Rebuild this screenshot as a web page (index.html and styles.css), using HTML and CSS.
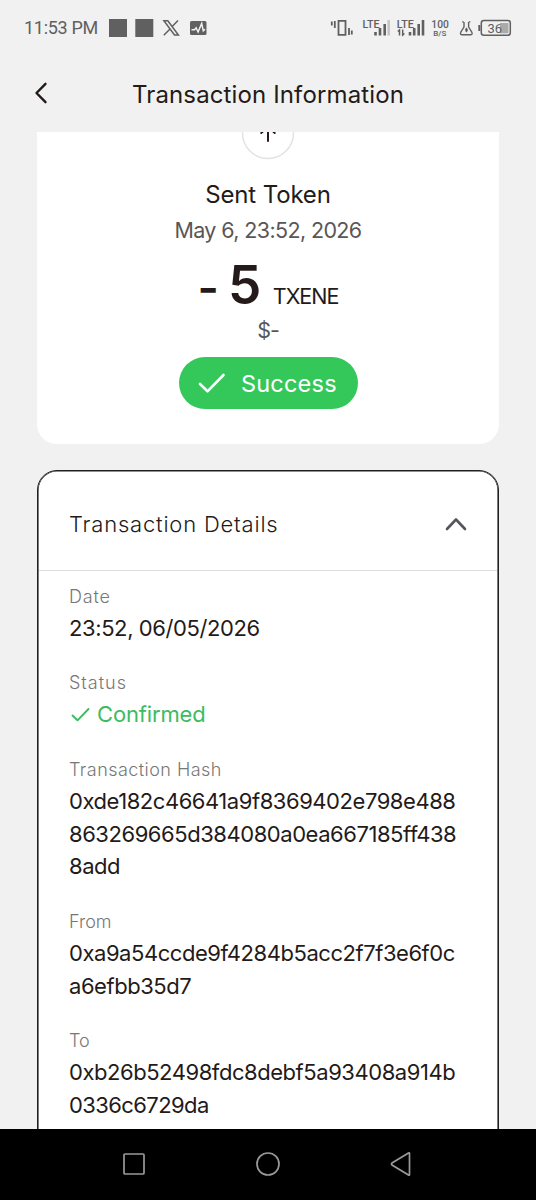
FILE: index.html
```html
<!DOCTYPE html>
<html lang="en">
<head>
<meta charset="utf-8">
<title>Transaction Information</title>
<link rel="stylesheet" href="styles.css">
</head>
<body>
<div class="screen">
  <div class="statusbar">
    <span class="clock">11:53 PM</span>
    <svg class="notifs" width="98" height="20" viewBox="109 17 98 20">
      <path class="solid" d="M109 18h18v18h-18zM135.300 18h18v18h-18z"/>
      <path class="line" stroke-width="1.500" d="M163.900 19.800h3.900l10.600 14.200h-3.900zM178 19.500l-6.300 6.600M170 28l-6.200 6.300"/>
      <rect class="solid" x="190" y="20" width="16.500" height="14" rx="1.500"/>
      <path class="trace" d="M191.500 28.800h3l1.600-2 2 4.200 3.600-8.500 1.600 7.300 1.700-1.500"/>
    </svg>
    <svg class="signals" width="183" height="22" viewBox="330 16 183 22">
      <path class="line" stroke-width="1.800" d="M338.500 19.800h7v14h-7zM331.800 20.500v4M334.800 20v7M349 27v7M351.800 29.500v4"/>
      <g class="net">
        <text x="362.500" y="27" textLength="17" lengthAdjust="spacingAndGlyphs">LTE</text>
        <text x="396.800" y="27" textLength="17" lengthAdjust="spacingAndGlyphs">LTE</text>
      </g>
      <path class="line" stroke-width="2.600" d="M375.500 31v3.500M380 27v7.500M384.700 23v11.500M410 31v3.500M414.200 27v7.500M418.700 23v11.500M423 19v15.500"/>
      <path class="faint" d="M388.700 19v15.500"/>
      <path class="line" stroke-width="1.500" d="M399.500 34.500v-5.500l-1.700 1.500M402.700 28.500v5.500l1.700-1.500"/>
      <text class="rate" x="431.300" y="27" textLength="17.500" lengthAdjust="spacingAndGlyphs">100</text>
      <text class="unit" x="433.300" y="35.300" textLength="13" lengthAdjust="spacingAndGlyphs">B/S</text>
      <path class="line" stroke-width="1.400" stroke-linejoin="round" d="M462.300 20.500l1.700 1v4.500l-3.200 5.200q-1 2.300 1 2.500h9q2-.2 1-2.500l-3.200-5.200v-4.500l1.700-1M466.900 27l-1.300 2h1.700l-1.300 2"/>
      <rect class="line" stroke-width="1.500" x="481.300" y="19.500" width="29" height="14.800" rx="2.500"/>
      <path class="line" stroke-width="2" d="M479.300 24v6"/>
      <rect class="charge" x="500" y="22" width="8.500" height="10.300"/>
      <text class="battery" x="487.500" y="31.500" textLength="14.500" lengthAdjust="spacingAndGlyphs">36</text>
    </svg>
  </div>

  <header class="topbar">
    <svg class="back" width="14" height="24" viewBox="0 0 14 24"><path d="M11.500 2.800L2.500 12l9 9.200"/></svg>
    <h1 class="title">Transaction Information</h1>
  </header>

  <main class="content">
    <section class="summary">
      <svg class="sent" width="54" height="28" viewBox="0 0 54 28">
        <circle cx="27" cy="1" r="25.500"/>
        <path d="M27 9V-9M20.300 1L27-5.500l6.700 6.500"/>
      </svg>
      <div class="kind">Sent Token</div>
      <div class="when">May 6, 23:52, 2026</div>
      <div class="amount"><span class="minus">-</span><span class="number">5</span><span class="symbol">TXENE</span></div>
      <div class="fiat">$-</div>
      <div class="pill">
        <svg width="28" height="22" viewBox="0 0 28 22"><path d="M2 12l7.500 7.300L25.500 3"/></svg>
        <span>Success</span>
      </div>
    </section>

    <section class="details">
      <div class="details-head">
        <h2>Transaction Details</h2>
        <svg width="24" height="14" viewBox="0 0 24 14"><path d="M3 12l9-9.500 9 9.500"/></svg>
      </div>
      <dl class="fields">
        <div class="field"><dt class="l-date">Date</dt><dd class="v-date">23:52, 06/05/2026</dd></div>
        <div class="field"><dt class="l-status">Status</dt><dd class="confirmed"><svg width="20" height="16" viewBox="0 0 20 16"><path d="M1.500 8.500l5 4.800L17.500 2"/></svg>Confirmed</dd></div>
        <div class="field"><dt class="l-hash">Transaction Hash</dt><dd class="hex"><span class="row">0xde182c46641a9f8369402e798e488</span><span class="row">863269665d384080a0ea667185ff438</span><span class="row">8add</span></dd></div>
        <div class="field"><dt>From</dt><dd class="hex"><span class="row">0xa9a54ccde9f4284b5acc2f7f3e6f0c</span><span class="row">a6efbb35d7</span></dd></div>
        <div class="field"><dt>To</dt><dd class="hex"><span class="row">0xb26b52498fdc8debf5a93408a914b</span><span class="row last">0336c6729da</span></dd></div>
      </dl>
    </section>
  </main>

  <nav class="navbar">
    <svg width="24" height="24" viewBox="0 0 24 24"><rect x="2" y="2" width="20" height="20" rx="1"/></svg>
    <svg width="24" height="24" viewBox="0 0 24 24"><circle cx="12" cy="12" r="11"/></svg>
    <svg width="24" height="24" viewBox="0 0 24 24"><path d="M20.500 1.500v21q0 1-1 .4L3 13q-1-1 0-2L19.500 1.100q1-.6 1 .4z"/></svg>
  </nav>
</div>
</body>
</html>
```

FILE: styles.css
```css
* { box-sizing: border-box; margin: 0; padding: 0; }
body { background: #f1f1f1; font-family: Inter, "Open Sans", sans-serif; color: #231a19; }
svg { display: block; flex: none; fill: none; }
.screen { width: 536px; height: 1200px; display: flex; flex-direction: column; overflow: hidden; }

.statusbar { height: 55px; flex: none; display: flex; align-items: center; padding: 0 23px 0 24px; font-family: Roboto, sans-serif; color: #606060; }
.clock { font-size: 18px; line-height: 20px; width: 85px; letter-spacing: -0.3px; white-space: nowrap; }
.signals { margin-left: auto; }
.solid { fill: #606060; }
.line { stroke: #606060; }
.trace { stroke: #f1f1f1; stroke-width: 1.5; }
.faint { stroke: #c4c4c4; stroke-width: 2.5; }
.charge { fill: #aaa; }
.statusbar text { fill: #606060; font-family: Roboto, sans-serif; }
.net { font-size: 11px; font-weight: 500; }
.rate { font-size: 11px; font-weight: 500; }
.unit { font-size: 8px; font-weight: 500; }
.battery { font-size: 12.5px; }

.topbar { height: 77px; flex: none; display: grid; grid-template-columns: 66px 1fr 66px; align-items: start; padding-top: 24px; }
.back { margin: 2px 0 0 34px; height: 24px; stroke: #231a19; stroke-width: 2.4; stroke-linecap: round; stroke-linejoin: round; }
.title { font-size: 24px; line-height: 31px; font-weight: 400; letter-spacing: 0.13px; text-align: center; white-space: nowrap; }

.content { flex: 1; min-height: 0; overflow: hidden; padding: 0 37px; }
.summary { height: 311.5px; background: #fff; border-radius: 0 0 20px 20px; display: flex; flex-direction: column; align-items: center; }
.sent circle { stroke: #e2e2e2; stroke-width: 1.5; }
.sent path { stroke: #231a19; stroke-width: 2; stroke-linecap: round; }
.kind { margin-top: 20px; font-size: 24px; line-height: 30px; letter-spacing: -0.15px; }
.when { margin-top: 6px; font-size: 21.5px; line-height: 28px; letter-spacing: -0.62px; color: #5b5656; }
.amount { margin-top: 11px; height: 60px; display: flex; align-items: baseline; line-height: 60px; }
.minus { font-size: 46px; font-weight: 600; }
.number { font-size: 53px; font-weight: 600; margin-left: 9px; }
.symbol { font-size: 21.5px; letter-spacing: -1px; margin-left: 11.5px; }
.fiat { margin-top: 1px; font-size: 21.5px; line-height: 28px; letter-spacing: -1px; color: #5b5656; }
.pill { margin-top: 13px; width: 179px; height: 52px; border-radius: 26px; background: #34c85a; color: #fff; display: flex; align-items: center; padding-left: 19px; gap: 15.5px; font-size: 23.5px; letter-spacing: 0.2px; }
.pill svg { stroke: #fff; stroke-width: 2.6; stroke-linecap: round; stroke-linejoin: round; }

.details { margin-top: 26.5px; width: 462px; height: 720px; border: 1px solid #231f1f; box-shadow: inset 0 0 0 0.6px #231f1f; border-radius: 20px; background: #fff; }
.details-head { height: 100px; margin: 0 1px; border-bottom: 1px solid #dedede; display: flex; align-items: center; justify-content: space-between; padding: 7px 29px 0 30px; }
.details-head h2 { font-size: 22px; line-height: 30px; font-weight: 300; letter-spacing: 0.8px; white-space: nowrap; }
.details-head svg { stroke: #55555c; stroke-width: 2.6; stroke-linecap: round; stroke-linejoin: round; }
.fields { padding: 14.5px 30px 0 31px; display: flex; flex-direction: column; gap: 28px; }
.field { display: flex; flex-direction: column; gap: 4px; }
dt { font-size: 18px; line-height: 22px; font-weight: 300; color: #777; }
.l-date { letter-spacing: 0.8px; }
.l-status { letter-spacing: 1px; }
.l-hash { letter-spacing: 0.45px; }
dd { font-size: 22px; line-height: 32.7px; white-space: nowrap; }
.v-date { letter-spacing: -0.4px; }
.hex { letter-spacing: -0.45px; }
.row { display: block; }
.last { letter-spacing: -0.6px; }
.confirmed { display: flex; align-items: center; gap: 6px; padding-left: 2px; letter-spacing: -0.15px; color: #3dbb61; }
.confirmed svg { stroke: #3dbb61; stroke-width: 1.9; stroke-linecap: round; stroke-linejoin: round; }

.navbar { height: 71px; flex: none; background: #000; display: flex; justify-content: center; align-items: center; gap: 110px; padding-bottom: 1px; }
.navbar svg { stroke: #999; stroke-width: 1.7; }
.navbar svg:last-child { margin-right: 1.5px; margin-left: -1.5px; }
```
